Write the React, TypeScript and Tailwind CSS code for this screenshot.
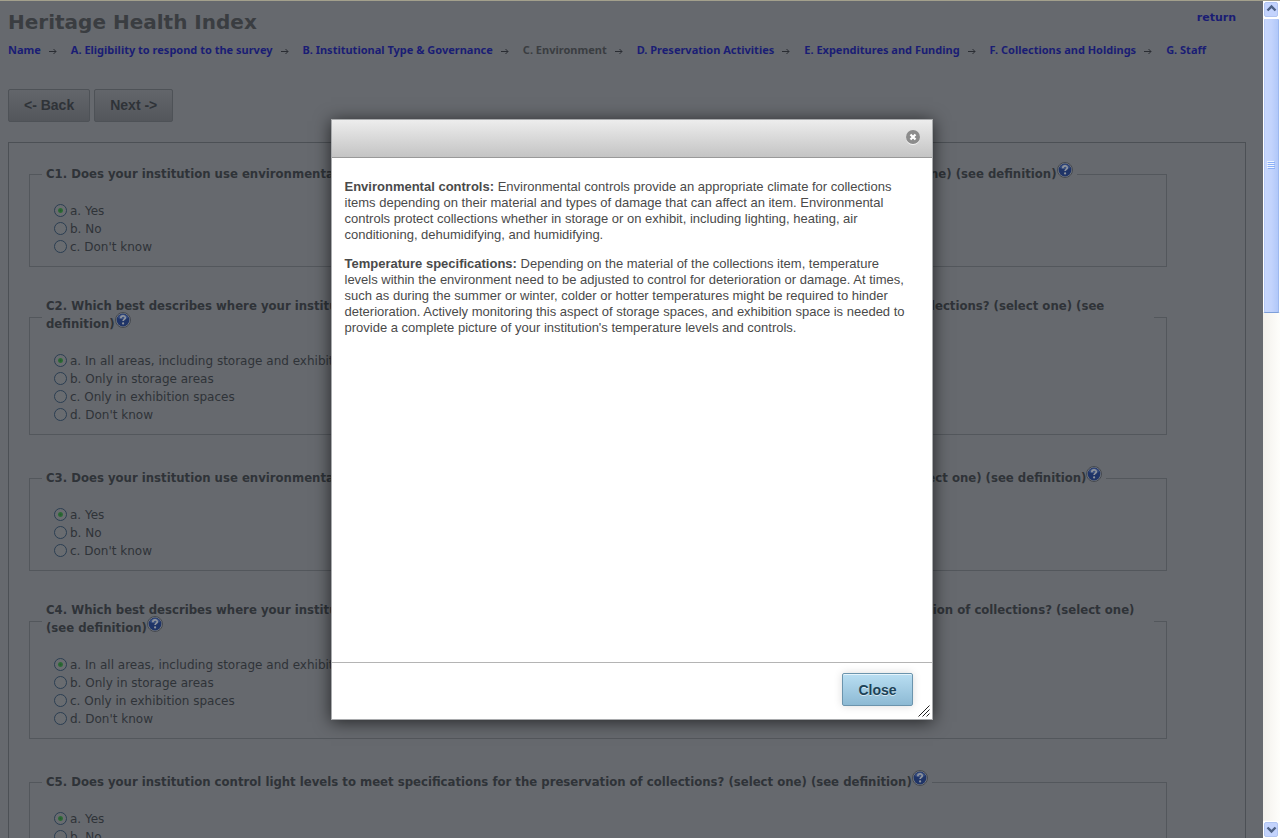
import { Fragment } from "react";

interface Question {
  id: string;
  text: string;
  options: string[];
  twoLines?: boolean;
}

const STEPS = [
  "Name",
  "A. Eligibility to respond to the survey",
  "B. Institutional Type & Governance",
  "C. Environment",
  "D. Preservation Activities",
  "E. Expenditures and Funding",
  "F. Collections and Holdings",
  "G. Staff",
];
const CURRENT_STEP = 3;

const YES_NO = ["a. Yes", "b. No", "c. Don't know"];
const AREAS = [
  "a. In all areas, including storage and exhibition areas",
  "b. Only in storage areas",
  "c. Only in exhibition spaces",
  "d. Don't know",
];

const QUESTIONS: Question[] = [
  {
    id: "C1",
    text: "Does your institution use environmental controls to meet temperature specifications for the preservation of collections? (select one)",
    options: YES_NO,
  },
  {
    id: "C2",
    text: "Which best describes where your institution has environmental controls for temperature specifications for the preservation of collections? (select one)",
    options: AREAS,
    twoLines: true,
  },
  {
    id: "C3",
    text: "Does your institution use environmental controls to meet relative humidity specifications for the preservation of collections? (select one)",
    options: YES_NO,
  },
  {
    id: "C4",
    text: "Which best describes where your institution has environmental controls to meet relative humidity specifications for the preservation of collections? (select one)",
    options: AREAS,
    twoLines: true,
  },
  {
    id: "C5",
    text: "Does your institution control light levels to meet specifications for the preservation of collections? (select one)",
    options: YES_NO,
  },
];

export default function App() {
  return (
    <div className="flex h-screen overflow-hidden border-t border-[#a3a08c] bg-[#66696e] font-['DejaVu_Sans',sans-serif] text-[#2f3338]">
      <div className="relative min-w-0 flex-1 overflow-hidden">
        <main className="pl-2 pr-[17px]">
          <header className="flex items-start justify-between pr-[10px] pt-[7px]">
            <h1 className="text-[20px] leading-7 font-bold text-[#3a3d41]">Heritage Health Index</h1>
            <a href="#return" className="text-[11px] leading-5 font-bold text-[#1a1d74]">
              return
            </a>
          </header>

          <StepNav />

          <div className="mt-[31px] flex gap-1">
            <StepButton>&lt;- Back</StepButton>
            <StepButton>Next -&gt;</StepButton>
          </div>

          <form className="mt-5 flex flex-col gap-[30px] border border-[#4c5055] pb-8 pl-5 pr-[78px] pt-[18px]">
            {QUESTIONS.map((q) => (
              <QuestionField key={q.id} question={q} />
            ))}
          </form>
        </main>

        <div className="absolute inset-0 flex items-center justify-center">
          <DefinitionDialog />
        </div>
      </div>
      <Scrollbar />
    </div>
  );
}

function StepNav() {
  return (
    <nav className="mt-[6px] flex items-center whitespace-nowrap font-['Noto_Sans',sans-serif] text-[11px] leading-4 font-bold text-[#1a1d74]">
      {STEPS.map((step, i) => (
        <Fragment key={step}>
          {i > 0 && (
            <svg className="mt-[2px] ml-2 mr-[14px] h-[7px] w-2 shrink-0" viewBox="0 0 8 7" fill="none" stroke="#2a2d33">
              <path d="M0 3.5h7M4.5 1l2.5 2.5L4.5 6" />
            </svg>
          )}
          {i === CURRENT_STEP ? (
            <span className="text-[#3a3d41]">{step}</span>
          ) : (
            <a href={`#step-${i}`}>{step}</a>
          )}
        </Fragment>
      ))}
    </nav>
  );
}

function StepButton({ children }: { children: React.ReactNode }) {
  return (
    <button
      type="button"
      className="h-[33px] rounded-[2px] border border-[#4e5257] bg-linear-to-b from-[#63666b] to-[#53565b] px-[15px] font-['Liberation_Sans',sans-serif] text-[14px] font-bold text-[#2f3338]"
    >
      {children}
    </button>
  );
}

function QuestionField({ question }: { question: Question }) {
  const { id, text, options, twoLines } = question;
  return (
    <fieldset className="min-w-0 border border-[#53575c] px-3 pb-[10px]">
      <legend
        className={`px-1 pb-1 font-['DejaVu_Sans_Condensed','DejaVu_Sans',sans-serif] text-[13px] leading-[18px] font-bold ${twoLines ? "" : "pt-1"}`}
      >
        {`${id}. ${text} (see definition)`}
        <HelpIcon />
      </legend>
      <div className="pl-3 pt-[15px]">
        {options.map((option, i) => (
          <label key={option} className="flex h-[18px] items-center gap-[3px] text-[12px] leading-[18px]">
            <input
              type="radio"
              name={id}
              defaultChecked={i === 0}
              className="mb-[2px] size-[13px] shrink-0 appearance-none rounded-full border border-[#2b3e52] bg-[#696c70] checked:bg-[radial-gradient(circle,#235c2c_0,#2f6a38_2px,#696c70_3px)]"
            />
            {option}
          </label>
        ))}
      </div>
    </fieldset>
  );
}

function HelpIcon() {
  return (
    <svg className="-mt-[10px] inline-block size-4 align-middle" viewBox="0 0 16 16" role="img" aria-label="Help">
      <circle cx="8" cy="8" r="7.5" fill="#7b7e83" stroke="#45494f" />
      <circle cx="8" cy="8" r="6.4" fill="#1f3467" />
      <path d="M3 6a5.2 5.2 0 0 1 10 0c-3 1.600-7 1.600-10 0z" fill="#3a5080" />
      <path d="M5.800 6.200c0-3 4.500-3 4.500-.4 0 1.500-2.200 1.600-2.200 3.200" fill="none" stroke="#8d929b" strokeWidth="1.700" />
      <circle cx="8.100" cy="11.400" r="1.100" fill="#8d929b" />
    </svg>
  );
}

function DefinitionDialog() {
  return (
    <div
      role="dialog"
      aria-label="Definitions"
      className="relative flex w-[602px] flex-col border border-[#a9abad] bg-white font-['Liberation_Sans',sans-serif] text-[13px] leading-4 text-[#4a4a4a] shadow-[0_2px_16px_rgba(0,0,0,0.65)]"
    >
      <div className="flex h-[38px] items-center justify-end border-b border-[#999] bg-linear-to-b from-[#ededed] to-[#c4c4c4] pr-[11px]">
        <button type="button" aria-label="Close dialog">
          <svg className="-mt-[3px] size-4" viewBox="0 0 16 16">
            <circle cx="8" cy="9" r="7" fill="#f4f4f4" />
            <circle cx="8" cy="8" r="7" fill="#8c8c8c" />
            <path d="M5.500 5.500l5 5M10.500 5.500l-5 5" stroke="#fff" strokeWidth="2.200" />
          </svg>
        </button>
      </div>

      <div className="min-h-[504px] space-y-[13px] pl-[13px] pr-5 pt-[21px]">
        <p>
          <b>Environmental controls:</b> Environmental controls provide an appropriate climate for collections items
          depending on their material and types of damage that can affect an item. Environmental controls protect
          collections whether in storage or on exhibit, including lighting, heating, air conditioning, dehumidifying,
          and humidifying.
        </p>
        <p>
          <b>Temperature specifications:</b> Depending on the material of the collections item, temperature levels
          within the environment need to be adjusted to control for deterioration or damage. At times, such as during
          the summer or winter, colder or hotter temperatures might be required to hinder deterioration. Actively
          monitoring this aspect of storage spaces, and exhibition space is needed to provide a complete picture of
          your institution's temperature levels and controls.
        </p>
      </div>

      <div className="flex justify-end border-t border-[#b4b4b4] pb-[13px] pr-[19px] pt-[10px]">
        <button
          type="button"
          className="h-[33px] rounded-[2px] border border-[#6b94ad] bg-linear-to-b from-[#b9def2] to-[#8dbad4] px-[15px] text-[14px] font-bold text-[#1c4257] shadow-[0_0_8px_rgba(0,0,0,0.15),inset_0_1px_0_#e6f4fb] [text-shadow:0_1px_0_rgba(255,255,255,0.6)]"
        >
          Close
        </button>
      </div>

      <svg className="absolute right-[2px] bottom-[2px] size-3" viewBox="0 0 12 12" fill="none" stroke="#222">
        <path d="M.5 11.500l11-11M4.500 11.500l7-7M8.500 11.500l3-3" />
      </svg>
    </div>
  );
}

function Scrollbar() {
  return (
    <div className="flex w-[17px] shrink-0 flex-col bg-linear-to-r from-[#f3f1ec] to-[#fefefb]" aria-hidden="true">
      <ScrollArrow d="M4.500 9.500l4-4 4 4" />
      <div className="flex h-[295px] flex-col items-center justify-center gap-px rounded-[2px] border border-x-white border-t-white border-b-[#7d9fd9] bg-linear-to-r from-[#c9d8fc] via-[#c2d3fc] to-[#aec6f8] shadow-[inset_1px_0_0_#b4c8f6,inset_-1px_0_0_#9db8ee]">
        {[0, 1, 2, 3].map((n) => (
          <span key={n} className="h-px w-[7px] bg-[#8cb0f8] shadow-[-1px_-1px_0_#eef4fe]" />
        ))}
      </div>
      <div className="flex-1" />
      <ScrollArrow d="M4.500 6.500l4 4 4-4" />
    </div>
  );
}

function ScrollArrow({ d }: { d: string }) {
  return (
    <svg className="h-[17px] w-[17px] shrink-0" viewBox="0 0 17 17" fill="none">
      <rect width="17" height="17" fill="#fff" />
      <rect x="1.500" y="1.500" width="13" height="14" rx="1.500" fill="#c3d3fd" stroke="#b0c4f2" />
      <path d={d} stroke="#4d6185" strokeWidth="2.400" />
    </svg>
  );
}
